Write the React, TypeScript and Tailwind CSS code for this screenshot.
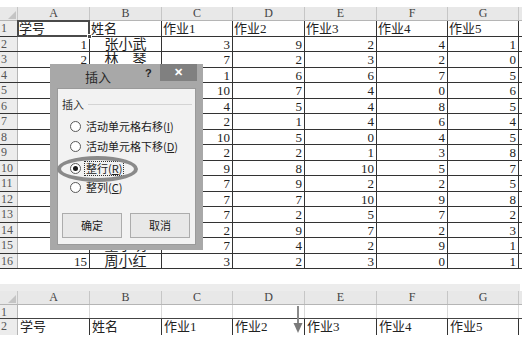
const cols = ["A", "B", "C", "D", "E", "F", "G"];
const widths = ["w-[72px]", "w-[72px]", "w-[71px]", "w-[72px]", "w-[72px]", "w-[71px]", "w-[71px]"];

const head = ["学号", "姓名", "作业1", "作业2", "作业3", "作业4", "作业5"];

// names of rows 4-14 sit under the dialog
const rows: (string | number)[][] = [
  [1, "张小武", 3, 9, 2, 4, 1],
  [2, "林　琴", 7, 2, 3, 2, 0],
  [3, "", 1, 6, 6, 7, 5],
  [4, "", 10, 7, 4, 0, 6],
  [5, "", 4, 5, 4, 8, 5],
  [6, "", 2, 1, 4, 6, 4],
  [7, "", 10, 5, 0, 4, 5],
  [8, "", 2, 2, 1, 3, 8],
  [9, "", 9, 8, 10, 5, 7],
  [10, "", 7, 9, 2, 2, 5],
  [11, "", 7, 7, 10, 9, 8],
  [12, "", 7, 2, 5, 7, 2],
  [13, "", 2, 9, 7, 2, 3],
  [14, "董小明", 7, 4, 2, 9, 1],
  [15, "周小红", 3, 2, 3, 0, 1],
];

const serif = "font-['Liberation_Serif','Noto_Sans_CJK_SC',serif]";
const ui = "font-['Noto_Sans_CJK_SC','Liberation_Sans',sans-serif]";

function ColHeader({ strip }: { strip?: boolean }) {
  return (
    <div className="flex flex-col">
      {strip && <div className="h-[7px] w-[520px] bg-[#ececec]" />}
      <div className={`flex h-[14px] bg-[#e8e8e8] border-b border-[#b5b5b5] text-[12px] leading-[13px] text-[#444] ${serif}`}>
        <div className="w-[18px] border-r border-[#c6c6c6] flex items-end justify-end pr-[1px] pb-[1px]">
          <div className="w-0 h-0 border-l-[8px] border-l-transparent border-b-[8px] border-b-[#c4c4c4]" />
        </div>
        {cols.map((c, i) => (
          <div key={c} className={`${widths[i]} border-r border-[#c6c6c6] text-center`}>
            {c}
          </div>
        ))}
      </div>
    </div>
  );
}

function RowLabel({ n }: { n: number }) {
  return (
    <div className={`w-[18px] shrink-0 bg-[#ececec] border-r border-[#b5b5b5] pl-[1px] text-[12px] text-[#555] overflow-hidden ${serif}`}>
      {n}
    </div>
  );
}

function TopGrid() {
  return (
    <div className="mt-[7px]">
      <ColHeader />
      <div className={`text-[13px] leading-[15px] text-[#222] ${serif}`}>
        <div className="flex h-[15.5px] border-b border-[#333]">
          <RowLabel n={1} />
          {head.map((h, i) => (
            <div key={h} className={`${widths[i]} relative border-r border-[#333] pl-[1px] whitespace-nowrap`}>
              {h}
              {i === 0 && (
                <div className="absolute -inset-x-[1px] -top-[1px] -bottom-[1px] border-2 border-[#4a4a4a]">
                  <div className="absolute -right-[4px] -bottom-[4px] w-[5px] h-[5px] bg-[#4a4a4a] border border-white" />
                </div>
              )}
            </div>
          ))}
        </div>
        {rows.map((r, ri) => (
          <div key={ri} className="flex h-[15.5px] border-b border-[#333]">
            <RowLabel n={ri + 2} />
            {r.map((v, i) => (
              <div
                key={i}
                className={`${widths[i]} border-r border-[#333] px-[2px] ${i === 1 ? "text-center text-[14px]" : "text-right"}`}
              >
                {v}
              </div>
            ))}
          </div>
        ))}
      </div>
    </div>
  );
}

function BottomGrid() {
  return (
    <div className="mt-[15px] relative">
      <ColHeader strip />
      <div className={`text-[13px] leading-[14px] text-[#222] ${serif}`}>
        <div className="flex h-[14px] border-b border-[#444]">
          <RowLabel n={1} />
          {cols.map((c, i) => (
            <div key={c} className={`${widths[i]} border-r border-[#d9d9d9]`} />
          ))}
        </div>
        <div className="flex h-[16px]">
          <RowLabel n={2} />
          {head.map((h, i) => (
            <div key={h} className={`${widths[i]} border-r border-[#333] pl-[2px] pt-[1px]`}>
              {h}
            </div>
          ))}
        </div>
      </div>
      <svg className="absolute left-[293px] top-[22px]" width="10" height="27" viewBox="0 0 10 27">
        <line x1="5" y1="0" x2="5" y2="20" stroke="#8a8a8a" strokeWidth="2" />
        <polygon points="0.5,17 9.5,17 5,27" fill="#7a7a7a" />
      </svg>
    </div>
  );
}

function Radio({ checked }: { checked?: boolean }) {
  return (
    <span className="w-[11px] h-[11px] rounded-full border border-[#5a5a5a] bg-white flex items-center justify-center shrink-0">
      {checked && <span className="w-[5px] h-[5px] rounded-full bg-[#1a1a1a]" />}
    </span>
  );
}

function Option({ label, acc, checked, mt }: { label: string; acc: string; checked?: boolean; mt: string }) {
  return (
    <div className={`flex items-center h-[14px] pl-[12px] ${mt}`}>
      <Radio checked={checked} />
      <span className={`ml-[3px] whitespace-nowrap px-[1px] ${checked ? "border border-dotted border-[#333]" : "border border-transparent"}`}>
        {label}(<span className="underline">{acc}</span>)
      </span>
    </div>
  );
}

function Dialog() {
  return (
    <div className={`absolute left-[50px] top-[64px] w-[153px] h-[186px] bg-[#a8a8a8] flex flex-col text-[11px] leading-[13px] text-[#222] ${ui}`}>
      <div className="flex h-[24px] shrink-0">
        <span className="ml-[35px] mt-[6px] text-[13px] leading-[14px] text-[#2a2a2a]">插入</span>
        <span className="ml-[34px] mt-[3px] text-[11px] font-bold text-[#222] font-['Liberation_Sans',sans-serif]">?</span>
        <div className="ml-[8px] w-[37px] h-[17px] bg-[#808080] flex items-center justify-center text-white text-[11px] font-bold font-['Liberation_Sans',sans-serif]">
          ✕
        </div>
      </div>
      <div className="mx-[7px] mb-[5px] flex-1 bg-[#f2f2f2] border border-[#9a9a9a] flex flex-col">
        <div className="flex items-center mt-[9px] pl-[4px] pr-[3px]">
          <span className="text-[#333]">插入</span>
          <div className="flex-1 ml-[4px] h-px bg-[#d4d4d4]" />
        </div>
        <Option label="活动单元格右移" acc="I" mt="mt-[8px]" />
        <Option label="活动单元格下移" acc="D" mt="mt-[6px]" />
        <Option label="整行" acc="R" checked mt="mt-[8px]" />
        <Option label="整列" acc="C" mt="mt-[5px]" />
        <div className="flex gap-[8px] pl-[4px] mt-[19px]">
          <div className="w-[60px] h-[25px] border border-[#acacac] bg-[#e8e8e8] flex items-center justify-center">确定</div>
          <div className="w-[60px] h-[25px] border border-[#acacac] bg-[#e8e8e8] flex items-center justify-center">取消</div>
        </div>
      </div>
    </div>
  );
}

export default function App() {
  return (
    <div className="relative w-[522px] h-[339px] bg-white overflow-hidden">
      <TopGrid />
      <BottomGrid />
      <Dialog />
      <div className="absolute left-[57px] top-[156px] w-[81px] h-[26px] rounded-[50%] border-[4px] border-[#8a8a8a]" />
    </div>
  );
}
